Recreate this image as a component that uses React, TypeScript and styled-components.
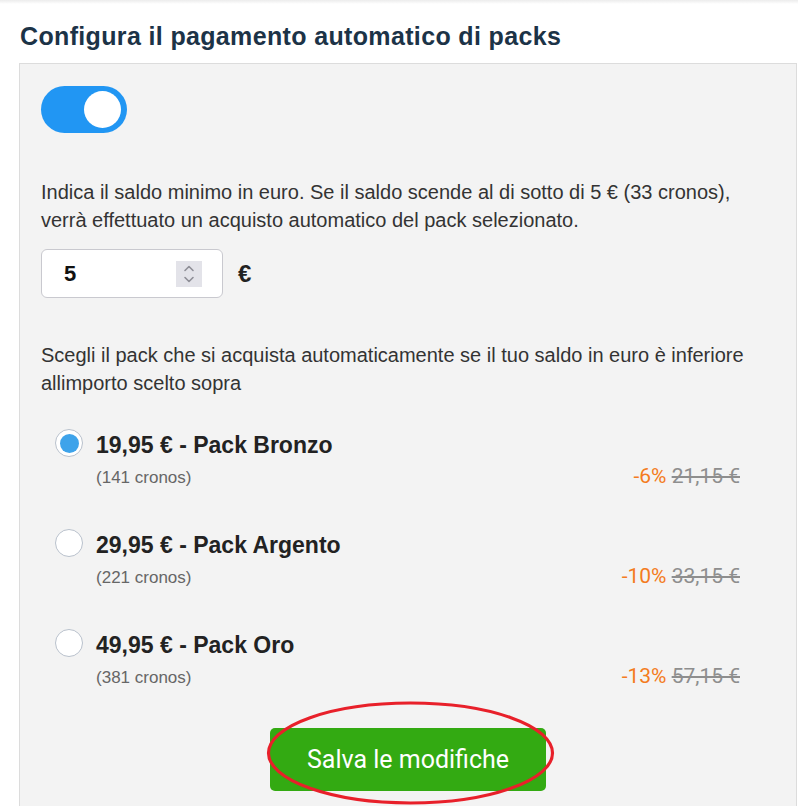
import React from "react";
import styled, { createGlobalStyle } from "styled-components";

const GlobalStyle = createGlobalStyle`
  html, body {
    margin: 0;
    padding: 0;
    background: #ffffff;
  }
  body {
    font-family: "Liberation Sans", Arial, sans-serif;
    overflow: hidden;
  }
`;

const packs = [
  { price: "19,95 €", name: "Pack Bronzo", cronos: 141, off: "-6%", old: "21,15 €", checked: true },
  { price: "29,95 €", name: "Pack Argento", cronos: 221, off: "-10%", old: "33,15 €", checked: false },
  { price: "49,95 €", name: "Pack Oro", cronos: 381, off: "-13%", old: "57,15 €", checked: false },
];

export default function App() {
  return (
    <>
      <GlobalStyle />
      <TopShade />
      <Page>
        <Title>Configura il pagamento automatico di packs</Title>
        <Panel>
          <Toggle $on />
          <Text>
            Indica il saldo minimo in euro. Se il saldo scende al di sotto di 5 € (33 cronos),
            verrà effettuato un acquisto automatico del pack selezionato.
          </Text>
          <AmountRow>
            <Field>
              <AmountInput value="5" readOnly />
              <Spinner>
                <svg width="12" height="22" viewBox="0 0 12 22" fill="none" stroke="#8e8e96" strokeWidth="1.6" strokeLinecap="round" strokeLinejoin="round">
                  <path d="M2 7.5 L6 3.5 L10 7.5" />
                  <path d="M2 14.5 L6 18.5 L10 14.5" />
                </svg>
              </Spinner>
            </Field>
            <Currency>€</Currency>
          </AmountRow>
          <Text $top={43}>
            Scegli il pack che si acquista automaticamente se il tuo saldo in euro è inferiore
            allimporto scelto sopra
          </Text>
          <PackList>
            {packs.map((p) => (
              <PackRow key={p.name}>
                <Radio $checked={p.checked} />
                <PackBody>
                  <PackName>
                    {p.price} - {p.name}
                  </PackName>
                  <PackMeta>
                    <Cronos>({p.cronos} cronos)</Cronos>
                    <Discount>
                      <Off>{p.off}</Off> <Old>{p.old}</Old>
                    </Discount>
                  </PackMeta>
                </PackBody>
              </PackRow>
            ))}
          </PackList>
          <Actions>
            <SaveWrap>
              <SaveButton>Salva le modifiche</SaveButton>
              <Circle width="294" height="110" viewBox="0 0 294 110">
                <ellipse cx="146.5" cy="55" rx="142" ry="50" fill="none" stroke="#e8202a" strokeWidth="3.2" />
              </Circle>
            </SaveWrap>
          </Actions>
        </Panel>
      </Page>
    </>
  );
}

const TopShade = styled.div`
  height: 4px;
  background: linear-gradient(#ececec, #ffffff);
`;

const Page = styled.div`
  padding: 18px 0 0 19px;
`;

const Title = styled.h1`
  margin: 0 0 13px 1px;
  font-size: 25px;
  line-height: 28px;
  letter-spacing: 0.35px;
  font-weight: 700;
  color: #1c3347;
`;

const Panel = styled.div`
  width: 778px;
  box-sizing: border-box;
  background: #f3f3f3;
  border: 1px solid #dcdcdc;
  padding: 22px 21px 40px 21px;
`;

const Toggle = styled.div<{ $on?: boolean }>`
  position: relative;
  width: 86px;
  height: 47px;
  border-radius: 24px;
  background: ${(p) => (p.$on ? "#2196f3" : "#cccccc")};
  &::after {
    content: "";
    position: absolute;
    top: 5px;
    left: ${(p) => (p.$on ? "43px" : "6px")};
    width: 37px;
    height: 37px;
    border-radius: 50%;
    background: #ffffff;
  }
`;

const Text = styled.p<{ $top?: number }>`
  margin: ${(p) => p.$top ?? 45}px 0 0 0;
  font-size: 20px;
  line-height: 28px;
  color: #333333;
`;

const AmountRow = styled.div`
  display: flex;
  align-items: center;
  margin-top: 15px;
`;

const Field = styled.div`
  width: 182px;
  height: 49px;
  box-sizing: border-box;
  display: flex;
  align-items: center;
  background: #ffffff;
  border: 1px solid #c9c9cf;
  border-radius: 6px;
  padding: 0 20px 0 22px;
`;

const AmountInput = styled.input`
  flex: 1;
  min-width: 0;
  border: none;
  outline: none;
  padding: 0;
  background: transparent;
  font-family: "Liberation Sans", Arial, sans-serif;
  font-size: 22px;
  font-weight: 700;
  color: #111111;
`;

const Spinner = styled.div`
  width: 26px;
  height: 26px;
  display: flex;
  align-items: center;
  justify-content: center;
  background: #e3e3e9;
`;

const Currency = styled.span`
  margin-left: 15px;
  font-size: 24px;
  font-weight: 700;
  color: #222222;
`;

const PackList = styled.div`
  display: flex;
  flex-direction: column;
  gap: 43px;
  margin-top: 32px;
  padding: 0 35px 0 14px;
`;

const PackRow = styled.div`
  display: flex;
  align-items: flex-start;
  gap: 13px;
`;

const Radio = styled.span<{ $checked?: boolean }>`
  flex: none;
  width: 28px;
  height: 28px;
  box-sizing: border-box;
  border-radius: 50%;
  border: 1px solid #b9c1cc;
  background: #ffffff;
  display: flex;
  align-items: center;
  justify-content: center;
  &::after {
    content: "";
    width: 19px;
    height: 19px;
    border-radius: 50%;
    background: ${(p) => (p.$checked ? "#3ea3ea" : "transparent")};
  }
`;

const PackBody = styled.div`
  flex: 1;
  margin-top: 2px;
`;

const PackName = styled.div`
  font-size: 23px;
  line-height: 28px;
  font-weight: 700;
  color: #222222;
`;

const PackMeta = styled.div`
  display: flex;
  align-items: baseline;
  justify-content: space-between;
  margin-top: 7px;
  height: 20px;
`;

const Cronos = styled.span`
  font-size: 17px;
  line-height: 20px;
  color: #666666;
`;

const Discount = styled.span`
  font-family: Roboto, "Liberation Sans", sans-serif;
  font-size: 21px;
  line-height: 20px;
`;

const Off = styled.span`
  color: #f47b20;
`;

const Old = styled.span`
  color: #8e8e8e;
  text-decoration: line-through;
`;

const Actions = styled.div`
  display: flex;
  justify-content: center;
  margin-top: 42px;
`;

const SaveWrap = styled.div`
  position: relative;
`;

const SaveButton = styled.button`
  width: 276px;
  height: 63px;
  border: none;
  border-radius: 5px;
  background: #33aa12;
  color: #ffffff;
  font-family: Roboto, "Liberation Sans", sans-serif;
  font-size: 25px;
  font-weight: 400;
  cursor: pointer;
`;

const Circle = styled.svg`
  position: absolute;
  left: -6px;
  top: -30px;
  pointer-events: none;
`;
